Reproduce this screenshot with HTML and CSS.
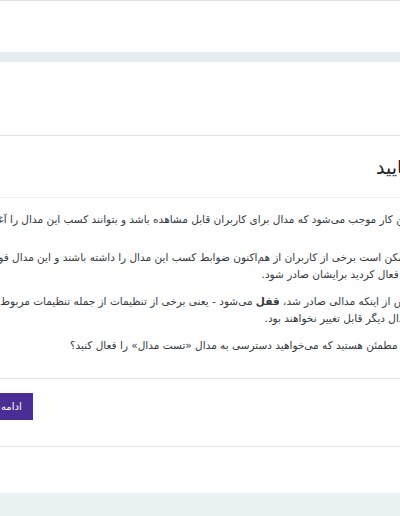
FILE: index.html
```html
<!DOCTYPE html>
<html lang="fa" dir="ltr">
<head>
<meta charset="utf-8">
<title>تایید</title>
<link rel="stylesheet" href="styles.css">
</head>
<body>
<div class="nav-edge"></div>
<div class="top-space"></div>
<div class="band"></div>
<div class="gap"></div>
<div class="dialog" dir="rtl">
  <div class="dialog-header">
    <h5 class="dialog-title">تایید</h5>
  </div>
  <div class="dialog-body">
    <p class="lead">این کار موجب می‌شود که مدال برای کاربران قابل مشاهده باشد و بتوانند کسب این مدال را آغاز کنند.</p>
    <p>ممکن است برخی از کاربران از هم‌اکنون ضوابط کسب این مدال را داشته باشند و این مدال فورا به محض اینکه آن را فعال کردید برایشان صادر شود.</p>
    <p>پس از اینکه مدالی صادر شد، <strong>قفل</strong> می‌شود - یعنی برخی از تنظیمات از جمله تنظیمات مربوط به ضوابط و انقضای مدال دیگر قابل تغییر نخواهند بود.</p>
    <p>آیا مطمئن هستید که می‌خواهید دسترسی به مدال «تست مدال» را فعال کنید؟</p>
  </div>
  <div class="dialog-footer">
    <button class="btn btn-primary" type="button">ادامه</button>
    <button class="btn btn-secondary" type="button">لغو</button>
  </div>
</div>
<div class="after"></div>
<div class="bottom-band"></div>
</body>
</html>
```
FILE: styles.css
```css
html, body {
  margin: 0;
  padding: 0;
  overflow: hidden;
  background: #fff;
}
body {
  font-family: "DejaVu Sans", "Noto Sans", sans-serif;
  color: #343a40;
}
.nav-edge {
  height: 1px;
  background: #dfe2e5;
}
.top-space {
  height: 51px;
}
.band {
  height: 10px;
  background: #e7ecee;
}
.gap {
  height: 73px;
}
.dialog {
  margin-left: -105px;
  width: 531px;
  border-top: 1px solid #e2e4e6;
  border-bottom: 1px solid #e2e4e6;
}
.dialog-header {
  height: 61px;
  display: flex;
  align-items: center;
  padding: 0 18px 0 16px;
  border-bottom: 1px solid #f0f1f2;
}
.dialog-title {
  margin: 0;
  font-size: 19px;
  font-weight: 400;
  color: #1d2125;
}
.dialog-body {
  padding: 13px 16px 24px;
  font-size: 10.5px;
  line-height: 17px;
}
.dialog-body p {
  margin: 0 0 10px;
}
.dialog-body p.lead {
  margin-bottom: 21px;
}
.dialog-body p:last-child {
  margin-bottom: 0;
}
.dialog-body strong {
  font-weight: 700;
}
.dialog-footer {
  display: flex;
  justify-content: flex-end;
  gap: 4px;
  padding: 14px 16px 26px;
  border-top: 1px solid #e2e4e6;
}
.btn {
  font-family: inherit;
  font-size: 10px;
  height: 27px;
  padding: 0 10px;
  border-radius: 0;
  cursor: pointer;
}
.btn-primary {
  background: #4a2e96;
  border: 1px solid #4a2e96;
  color: #fff;
}
.btn-secondary {
  background: #ced4da;
  border: 1px solid #ced4da;
  color: #1d2125;
  min-width: 75px;
}
.after {
  height: 46px;
}
.bottom-band {
  height: 24px;
  background: #ebf2f4;
}
```
